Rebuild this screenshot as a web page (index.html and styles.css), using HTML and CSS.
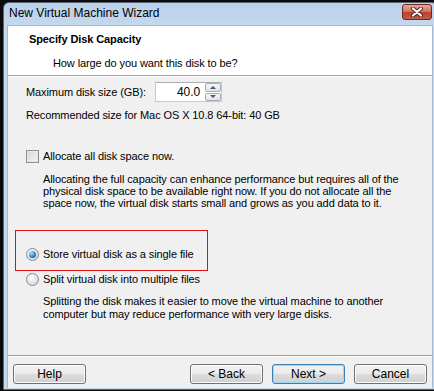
FILE: index.html
```html
<!DOCTYPE html>
<html lang="en">
<head>
    <meta charset="UTF-8">
    <title>New Virtual Machine Wizard</title>
    <link rel="stylesheet" href="styles.css">
</head>
<body>

    <div class="window">
        <div class="titlebar">
            <span class="title">New Virtual Machine Wizard</span>
            <span class="close">
                <svg width="16" height="10" viewBox="0 0 16 10">
                    <path d="M4 1.5 L12 8.5 M12 1.5 L4 8.5" stroke="#4a2620" stroke-width="4" stroke-linecap="round"/>
                    <path d="M4 1.5 L12 8.5 M12 1.5 L4 8.5" stroke="#fff" stroke-width="2.2" stroke-linecap="round"/>
                </svg>
            </span>
        </div>

        <div class="client">
            <div class="header">
                <h1>Specify Disk Capacity</h1>
                <p>How large do you want this disk to be?</p>
            </div>

            <div class="content">
                <div class="size-row">
                    <span class="size-label">Maximum disk size (GB):</span>
                    <div class="spin">
                        <span class="spin-value">40.0</span>
                        <div class="spin-btns">
                            <span class="spin-btn"><i class="arrow-up"></i></span>
                            <span class="spin-btn"><i class="arrow-down"></i></span>
                        </div>
                    </div>
                </div>
                <p class="recommend">Recommended size for Mac OS X 10.8 64-bit: 40 GB</p>

                <div class="check-row">
                    <span class="checkbox"></span>
                    <span>Allocate all disk space now.</span>
                </div>
                <p class="note">Allocating the full capacity can enhance performance but requires all of the physical disk space to be available right now. If you do not allocate all the space now, the virtual disk starts small and grows as you add data to it.</p>

                <div class="highlight">
                    <div class="radio-row">
                        <span class="radio checked"></span>
                        <span>Store virtual disk as a single file</span>
                    </div>
                </div>
                <div class="radio-row second">
                    <span class="radio"></span>
                    <span>Split virtual disk into multiple files</span>
                </div>
                <p class="note note-split">Splitting the disk makes it easier to move the virtual machine to another computer but may reduce performance with very large disks.</p>
            </div>

            <div class="footer">
                <button class="btn">Help</button>
                <div class="nav-btns">
                    <button class="btn">&lt; Back</button>
                    <button class="btn focused">Next &gt;</button>
                    <button class="btn">Cancel</button>
                </div>
            </div>
        </div>
    </div>

</body>
</html>
```

FILE: styles.css
```css
body {
    margin: 0;
    padding: 0;
    background-color: #0b0b0b;
    font-family: 'Liberation Sans', Arial, sans-serif;
    font-size: 11px;
    letter-spacing: -0.1px;
    color: #000;
    overflow: hidden;
}

.window {
    margin: 2px 0 0 3px;
    width: 433px;
    height: 386px;
    background: linear-gradient(#bcd2ea, #c6daef 30px, #c4d8ee);
    border: 1px solid #5b6776;
    border-radius: 6px 6px 0 0;
    display: flex;
    flex-direction: column;
}

.titlebar {
    height: 22px;
    display: flex;
    align-items: center;
    justify-content: space-between;
    padding: 0 5px 0 5px;
}

.title {
    font-size: 12px;
    letter-spacing: 0;
    color: #000;
    margin-top: -2px;
}

.close {
    width: 28px;
    height: 14px;
    margin-top: -4px;
    border: 1px solid #6b2a22;
    border-radius: 3px;
    background: linear-gradient(#e6a798, #cf7260 48%, #b9412d 52%, #c45a44);
    display: flex;
    align-items: center;
    justify-content: center;
}

.client {
    margin: 0 4px 0 3px;
    height: 362px;
    background-color: #f0f0f0;
    border: 1px solid #a4b9d2;
    border-bottom: none;
    display: flex;
    flex-direction: column;
}

.header {
    height: 50px;
    background-color: #fff;
    border-bottom: 1px solid #a0a0a0;
    box-shadow: 0 1px 0 #fff;
    padding-left: 21px;
    box-sizing: border-box;
    padding-top: 7px;
}

.header h1 {
    font-size: 11px;
    font-weight: bold;
    margin: 0;
    line-height: 13px;
}

.header p {
    margin: 11px 0 0 24px;
    line-height: 13px;
}

.content {
    flex: 1;
    padding: 6px 0 0 18px;
}

.size-row {
    display: flex;
    align-items: center;
    height: 20px;
}

.size-label {
    width: 129px;
}

.spin {
    display: flex;
    height: 20px;
    width: 67px;
    box-sizing: border-box;
    background-color: #fff;
    border: 1px solid #c5c8ce;
    border-top-color: #abadb3;
}

.spin-value {
    flex: 1;
    text-align: right;
    line-height: 18px;
    padding-right: 5px;
    font-size: 12px;
}

.spin-btns {
    width: 16px;
    display: flex;
    flex-direction: column;
    gap: 1px;
}

.spin-btn {
    flex: 1;
    border: 1px solid #a9acb2;
    border-radius: 2px;
    background: linear-gradient(#f6f6f6, #e2e2e2);
    display: flex;
    align-items: center;
    justify-content: center;
}

.arrow-up,
.arrow-down {
    width: 0;
    height: 0;
    border-left: 3px solid transparent;
    border-right: 3px solid transparent;
}

.arrow-up {
    border-bottom: 3px solid #3d5a86;
}

.arrow-down {
    border-top: 3px solid #3d5a86;
}

.recommend {
    margin: 7px 0 0 0;
    line-height: 13px;
}

.check-row,
.radio-row {
    display: flex;
    align-items: center;
    gap: 4px;
    line-height: 13px;
}

.check-row {
    margin-top: 28px;
}

.checkbox {
    width: 11px;
    height: 11px;
    border: 1px solid #8e8f8f;
    background: linear-gradient(135deg, #d5d5d5, #f5f5f5);
    box-shadow: inset 0 0 0 1px #e8e8e8;
}

.note {
    margin: 10px 0 0 17px;
    line-height: 12px;
    width: 370px;
}

.note-split {
    margin-top: 9px;
    line-height: 13px;
}

.highlight {
    margin: 21px 0 0 -11px;
    width: 193px;
    height: 41px;
    border: 1px solid #e01010;
    padding: 17px 0 0 10px;
    box-sizing: border-box;
}

.radio-row.second {
    margin-top: 2px;
}

.radio {
    width: 11px;
    height: 11px;
    border: 1px solid #8b8b8b;
    border-radius: 50%;
    background: radial-gradient(circle at 40% 35%, #fff, #dcdcdc 70%, #c8c8c8);
    position: relative;
}

.radio.checked::after {
    content: '';
    position: absolute;
    left: 2px;
    top: 2px;
    width: 7px;
    height: 7px;
    border-radius: 50%;
    background: radial-gradient(circle at 35% 30%, #aee0ff, #2a86c8 55%, #0d3f6e);
}

.footer {
    height: 33px;
    border-top: 1px solid #a0a0a0;
    box-shadow: inset 0 1px 0 #fff;
    display: flex;
    justify-content: space-between;
    align-items: flex-start;
    padding: 8px 5px 0 5px;
    box-sizing: border-box;
}

.nav-btns {
    display: flex;
    gap: 9px;
}

.btn {
    width: 73px;
    height: 20px;
    font-family: 'Liberation Sans', Arial, sans-serif;
    font-size: 12px;
    color: #000;
    border: 1px solid #707070;
    border-radius: 3px;
    background: linear-gradient(#f2f2f2, #ebebeb 48%, #dddddd 52%, #cfcfcf);
    box-shadow: inset 0 0 0 1px #fcfcfc;
    padding: 0;
}

.btn.focused {
    border-color: #3c7fb1;
    box-shadow: inset 0 0 0 1px #9fd7f5;
}
```
